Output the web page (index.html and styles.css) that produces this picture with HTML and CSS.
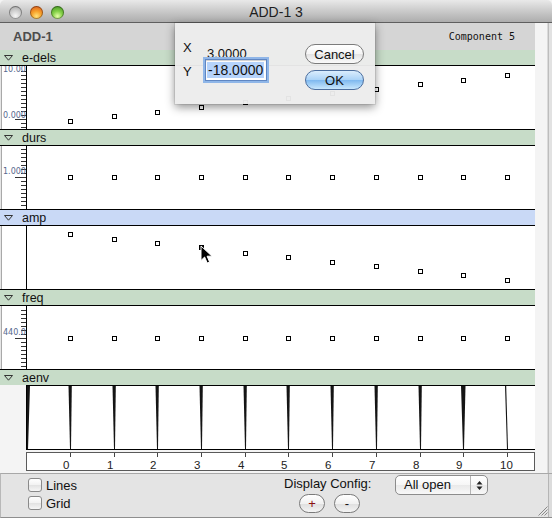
FILE: index.html
```html
<!DOCTYPE html>
<html>
<head>
<meta charset="utf-8">
<title>ADD-1 3</title>
<link rel="stylesheet" href="styles.css">
</head>
<body>
<div class="window">
  <header class="titlebar">
    <div class="lights"><span class="light l-grey"></span><span class="light l-red"></span><span class="light l-green"></span></div>
    <div class="title">ADD-1 3</div>
    <div></div>
  </header>

  <div class="main">
    <div class="content">
      <div class="topbar"><span class="name">ADD-1</span><span class="comp">Component 5</span></div>

      <section class="track">
        <div class="thead"><svg class="tri" width="9" height="6"><path d="M0.5 0.5H8.5L4.5 5.2Z"/></svg>e-dels</div>
        <div class="tbody">
          <div class="ruler">
            <svg width="26" height="63">
              <path class="ticks" d="M21 5.5H26M21 9.5H26M21 13.5H26M21 17.5H26M21 21.5H26M21 25.5H26M21 29.5H26M21 33.5H26M21 37.5H26M21 41.5H26M21 45.5H26M21 49.5H26M15 53.5H26M21 57.5H26M21 61.5H26"/>
              <text class="rlabel" x="3" y="5.5">10.00</text>
              <text class="rlabel" x="3" y="51.5">0.000</text>
            </svg>
          </div>
          <div class="plot">
            <svg width="508" height="63">
              <g class="pts">
                <rect x="41.5" y="53.5" width="4" height="4"/><rect x="85.5" y="48.5" width="4" height="4"/><rect x="128.5" y="44.5" width="4" height="4"/><rect x="172.5" y="39.5" width="4" height="4"/><rect x="216.5" y="34.5" width="4" height="4"/><rect x="259.5" y="30.5" width="4" height="4"/><rect x="303.5" y="25.5" width="4" height="4"/><rect x="347.5" y="21.5" width="4" height="4"/><rect x="391.5" y="16.5" width="4" height="4"/><rect x="434.5" y="12.5" width="4" height="4"/><rect x="478.5" y="7.5" width="4" height="4"/>
              </g>
            </svg>
          </div>
        </div>
      </section>

      <section class="track">
        <div class="thead"><svg class="tri" width="9" height="6"><path d="M0.5 0.5H8.5L4.5 5.2Z"/></svg>durs</div>
        <div class="tbody">
          <div class="ruler">
            <svg width="26" height="63">
              <path class="ticks" d="M21 3.5H26M21 7.5H26M21 11.5H26M21 15.5H26M21 19.5H26M21 23.5H26M21 27.5H26M15 31.5H26M21 35.5H26M21 39.5H26M21 43.5H26M21 47.5H26M21 51.5H26M21 55.5H26M21 59.5H26"/>
              <text class="rlabel" x="3" y="28">1.000</text>
            </svg>
          </div>
          <div class="plot">
            <svg width="508" height="63">
              <g class="pts">
                <rect x="41.5" y="29.5" width="4" height="4"/><rect x="85.5" y="29.5" width="4" height="4"/><rect x="128.5" y="29.5" width="4" height="4"/><rect x="172.5" y="29.5" width="4" height="4"/><rect x="216.5" y="29.5" width="4" height="4"/><rect x="259.5" y="29.5" width="4" height="4"/><rect x="303.5" y="29.5" width="4" height="4"/><rect x="347.5" y="29.5" width="4" height="4"/><rect x="391.5" y="29.5" width="4" height="4"/><rect x="434.5" y="29.5" width="4" height="4"/><rect x="478.5" y="29.5" width="4" height="4"/>
              </g>
            </svg>
          </div>
        </div>
      </section>

      <section class="track">
        <div class="thead selected"><svg class="tri" width="9" height="6"><path d="M0.5 0.5H8.5L4.5 5.2Z"/></svg>amp</div>
        <div class="tbody">
          <div class="ruler"></div>
          <div class="plot">
            <svg width="508" height="63">
              <g class="pts">
                <rect x="41.5" y="6.5" width="4" height="4"/><rect x="85.5" y="11.5" width="4" height="4"/><rect x="128.5" y="15.5" width="4" height="4"/><rect class="on" x="172.5" y="19.5" width="4" height="4"/><rect x="216.5" y="25.5" width="4" height="4"/><rect x="259.5" y="29.5" width="4" height="4"/><rect x="303.5" y="34.5" width="4" height="4"/><rect x="347.5" y="38.5" width="4" height="4"/><rect x="391.5" y="43.5" width="4" height="4"/><rect x="434.5" y="47.5" width="4" height="4"/><rect x="478.5" y="52.5" width="4" height="4"/>
              </g>
            </svg>
          </div>
        </div>
      </section>

      <section class="track">
        <div class="thead"><svg class="tri" width="9" height="6"><path d="M0.5 0.5H8.5L4.5 5.2Z"/></svg>freq</div>
        <div class="tbody">
          <div class="ruler">
            <svg width="26" height="63">
              <path class="ticks" d="M21 4.5H26M21 8.5H26M21 12.5H26M21 16.5H26M21 20.5H26M21 24.5H26M21 28.5H26M15 32.5H26M21 36.5H26M21 40.5H26M21 44.5H26M21 48.5H26M21 52.5H26M21 56.5H26M21 60.5H26"/>
              <text class="rlabel" x="3" y="29">440.0</text>
            </svg>
          </div>
          <div class="plot">
            <svg width="508" height="63">
              <g class="pts">
                <rect x="41.5" y="30.5" width="4" height="4"/><rect x="85.5" y="30.5" width="4" height="4"/><rect x="128.5" y="30.5" width="4" height="4"/><rect x="172.5" y="30.5" width="4" height="4"/><rect x="216.5" y="30.5" width="4" height="4"/><rect x="259.5" y="30.5" width="4" height="4"/><rect x="303.5" y="30.5" width="4" height="4"/><rect x="347.5" y="30.5" width="4" height="4"/><rect x="391.5" y="30.5" width="4" height="4"/><rect x="434.5" y="30.5" width="4" height="4"/><rect x="478.5" y="30.5" width="4" height="4"/>
              </g>
            </svg>
          </div>
        </div>
      </section>

      <section class="track">
        <div class="thead"><svg class="tri" width="9" height="6"><path d="M0.5 0.5H8.5L4.5 5.2Z"/></svg>aenv</div>
        <div class="tbody">
          <div class="ruler blank"></div>
          <div class="plot">
            <svg width="508" height="63">
              <g class="env">
                <polygon points="0,0 3,0 1,63 0,63"/>
                <polygon points="41.5,0 44.8,0 44,63 43,63"/>
                <polygon points="85.5,0 88.8,0 88,63 87,63"/>
                <polygon points="128.5,0 131.8,0 131,63 130,63"/>
                <polygon points="172.5,0 175.8,0 175,63 174,63"/>
                <polygon points="216.5,0 219.8,0 219,63 218,63"/>
                <polygon points="259.5,0 262.8,0 262,63 261,63"/>
                <polygon points="303.5,0 306.8,0 306,63 305,63"/>
                <polygon points="347.5,0 350.8,0 350,63 349,63"/>
                <polygon points="391.5,0 394.8,0 394,63 393,63"/>
                <polygon points="434,0 438.5,0 437,63 436,63"/>
                <polygon points="478,0 479.2,0 481,63 480,63"/>
              </g>
            </svg>
          </div>
        </div>
      </section>

      <div class="axis-wrap">
        <div class="axis">
          <svg width="507" height="17">
            <path class="aticks" d="M43.5 0V4M87.5 0V4M130.5 0V4M174.5 0V4M218.5 0V4M261.5 0V4M305.5 0V4M349.5 0V4M393.5 0V4M436.5 0V4M480.5 0V4"/>
            <g class="alabels">
              <text x="36" y="16">0</text><text x="80" y="16">1</text><text x="123" y="16">2</text><text x="167" y="16">3</text><text x="211" y="16">4</text><text x="254" y="16">5</text><text x="298" y="16">6</text><text x="342" y="16">7</text><text x="386" y="16">8</text><text x="429" y="16">9</text><text x="473" y="16">10</text>
            </g>
          </svg>
        </div>
      </div>
    </div>
    <div class="side"></div>
  </div>

  <footer class="controls">
    <div class="checks">
      <label class="check"><span class="box"></span>Lines</label>
      <label class="check"><span class="box"></span>Grid</label>
    </div>
    <div class="config">
      <div class="config-label">Display Config:</div>
      <div class="pm">
        <button class="round plus">+</button>
        <button class="round minus">-</button>
      </div>
    </div>
    <div class="popup">
      <span class="popup-text">All open</span>
      <span class="popup-arrows"><svg width="7" height="11"><path d="M3.5 1L6.5 4.5H0.5Z M3.5 10L0.5 6.5H6.5Z"/></svg></span>
    </div>
    <svg class="grip" width="12" height="12"><path d="M11.5 2.5L2.5 11.5M11.5 5.5L5.5 11.5M11.5 8.5L8.5 11.5"/></svg>
  </footer>

  <div class="sheet">
    <div class="fields">
      <span class="lab lab-x">X</span><span class="xval">3.0000</span>
      <span class="lab lab-y">Y</span><div class="field"><span class="sel">-18.0000</span></div>
    </div>
    <div class="buttons">
      <button class="btn cancel">Cancel</button>
      <button class="btn ok">OK</button>
    </div>
  </div>

  <svg class="cursor" width="13" height="20"><path d="M1 1L1 15.5L4.6 12L7.2 18L9.6 17L7.1 11.2L12 11.2Z"/></svg>
</div>
</body>
</html>
```

FILE: styles.css
```css
* { box-sizing: border-box; }
html, body { margin: 0; padding: 0; }
body {
  width: 552px;
  height: 518px;
  overflow: hidden;
  background: #d9d9d9;
  font-family: "Liberation Sans", Arial, sans-serif;
  color: #111;
}
.window {
  position: relative;
  width: 552px;
  height: 518px;
  display: flex;
  flex-direction: column;
  background: #f4f4f4;
}

/* title bar */
.titlebar {
  height: 23px;
  flex: none;
  display: grid;
  grid-template-columns: 1fr auto 1fr;
  align-items: center;
  background: linear-gradient(#e9e9e9, #cdcdcd 45%, #adadad);
  border-bottom: 1px solid #5f5f5f;
  border-radius: 5px 5px 0 0;
}
.lights { display: flex; gap: 8px; padding-left: 9px; padding-top: 2px; }
.light {
  width: 13px; height: 13px; border-radius: 50%;
  box-shadow: inset 0 0 0 1px rgba(0,0,0,.35);
}
.l-grey { background: radial-gradient(circle at 50% 75%, #f6f6f6 0%, #cfcfcf 45%, #9a9a9a 100%); }
.l-red { background: radial-gradient(circle at 50% 78%, #ffe27a 0%, #f7a32c 40%, #d8501a 95%); }
.l-green { background: radial-gradient(circle at 50% 78%, #e6ffa8 0%, #86d24a 40%, #3b8d1c 95%); }
.title { font-size: 14px; color: #1e1e1e; padding-top: 2px; }

/* main area */
.main { display: flex; height: 450px; flex: none; }
.content { width: 535px; display: flex; flex-direction: column; }
.side {
  flex: 1;
  background: linear-gradient(to right, #f4f4f4 0 12px, #dadada 12px 13px, #bdbdbd 13px 14px, #e2e2e2 14px);
}

.topbar {
  height: 27px;
  display: flex;
  align-items: center;
  justify-content: space-between;
  padding: 0 20px 0 13px;
  background: #d5d5d5;
}
.name { font-weight: bold; font-size: 13px; color: #4d4d4d; }
.comp { font-family: "DejaVu Sans Mono", "Liberation Mono", monospace; font-size: 10px; color: #111; }

/* tracks */
.track { height: 80px; display: flex; flex-direction: column; }
.thead {
  height: 15px;
  display: flex;
  align-items: center;
  padding-left: 4px;
  font-size: 12.5px;
  background: #c7dcc8;
}
.thead.selected { background: #c9d9f6; }
.tri { margin-right: 9px; fill: none; stroke: #333; stroke-width: 1; }
.tbody { height: 65px; display: flex; }
.ruler {
  width: 26px;
  background: #fff;
  border-top: 1px solid #000;
  border-bottom: 1px solid #000;
  box-shadow: inset 1px 0 #e6e6e6, inset 2px 0 #a9a9a9;
  overflow: hidden;
}
.ruler svg { display: block; }
.ruler.blank { background: transparent; border: none; box-shadow: none; }
.ticks { stroke: #333; stroke-width: 1; shape-rendering: crispEdges; }
.rlabel { font-family: "DejaVu Sans", sans-serif; font-size: 8px; fill: #56688e; }
.plot {
  flex: 1;
  background: #fff;
  border-top: 1px solid #000;
  border-bottom: 1px solid #000;
  border-left: 1px solid #000;
}
.plot svg { display: block; }
.pts rect { fill: #fff; stroke: #000; stroke-width: 1; shape-rendering: crispEdges; }
.pts rect.on { fill: #000; }
.env polygon { fill: #141414; }

/* axis */
.axis-wrap { height: 23px; padding: 2px 0 0 26px; }
.axis { width: 509px; height: 19px; border: 1px solid #5a5a5a; background: #fff; }
.axis svg { display: block; }
.aticks { stroke: #444; stroke-width: 1; shape-rendering: crispEdges; }
.alabels text { font-family: "Liberation Sans", Arial, sans-serif; font-size: 11.5px; fill: #222; }

/* bottom controls */
.controls {
  flex: 1;
  display: flex;
  align-items: flex-start;
  padding-left: 27px;
  font-size: 13px;
  border-top: 1px solid #a8a8a8;
  border-left: 1px solid #b8b8b8;
  border-bottom: 1px solid #8e8e8e;
  background: linear-gradient(to right, #e4e4e4 calc(100% - 4px), #b5b5b5 calc(100% - 4px) calc(100% - 3px), #dcdcdc calc(100% - 3px));
}
.checks { width: 256px; display: flex; flex-direction: column; gap: 4px; padding-top: 4px; }
.check { display: flex; align-items: center; gap: 4px; height: 14px; color: #111; }
.box {
  width: 14px; height: 14px;
  border: 1px solid #8a8a8a;
  border-radius: 3px;
  background: linear-gradient(#ffffff, #f2f2f2 50%, #e2e2e2 51%, #f6f6f6);
}
.config { width: 111px; display: flex; flex-direction: column; padding-top: 2px; }
.config-label { line-height: 15px; }
.pm { display: flex; gap: 9px; padding-left: 15px; margin-top: 3px; }
.round {
  width: 26px; height: 19px; padding: 0;
  border: 1px solid #7a7a7a;
  border-radius: 10px;
  background: linear-gradient(#ffffff, #f1f1f1 50%, #dedede 51%, #f4f4f4);
  font: 13px "Liberation Sans", Arial, sans-serif;
  line-height: 16px;
  color: #111;
}
.plus { color: #8a0f0f; }
.popup {
  width: 93px; height: 20px; margin-top: 1px;
  display: flex;
  border: 1px solid #8c8c8c;
  border-radius: 5px;
  background: linear-gradient(#ffffff, #f6f6f6 50%, #e9e9e9 51%, #f8f8f8);
}
.popup-text { flex: 1; padding-left: 8px; line-height: 18px; }
.popup-arrows {
  width: 17px;
  border-left: 1px solid #b4b4b4;
  display: flex; align-items: center; justify-content: center;
}
.popup-arrows svg { display: block; fill: #222; }
.grip { margin-left: auto; align-self: flex-end; margin-right: 4px; margin-bottom: 1px; stroke: #8a8a8a; stroke-width: 1; fill: none; }

/* sheet dialog */
.sheet {
  position: absolute;
  left: 175px; top: 23px;
  width: 200px; height: 81px;
  display: flex;
  align-items: flex-start;
  padding: 17px 0 0 8px;
  background: rgba(236, 236, 236, 0.96);
  box-shadow: 0 3px 9px rgba(0,0,0,.45), 0 0 0 1px rgba(0,0,0,.08);
  font-size: 13px;
  z-index: 5;
}
.fields { display: grid; grid-template-columns: 22px 62px; grid-template-rows: 19px 22px; }
.lab-x { align-self: start; line-height: 16px; }
.xval { align-self: end; line-height: 16px; margin-bottom: -3px; padding-left: 2px; }
.lab-y { align-self: center; padding-top: 3px; }
.field {
  position: relative;
  height: 22px;
  border: 1px solid #5f86c2;
  box-shadow: 0 0 0 2px #8fb6e8, inset 0 1px 1px rgba(0,0,0,.2);
  background: #fff;
  padding: 2px 1px 0 1px;
  font-size: 14px;
  line-height: 16px;
}
.sel { background: #b5d3fb; padding: 0 1px; }
.buttons { display: flex; flex-direction: column; gap: 6px; margin-left: 38px; margin-top: 4px; }
.btn {
  width: 59px; height: 20px; padding: 0;
  border-radius: 10px;
  font: 13px "Liberation Sans", Arial, sans-serif;
  color: #111;
}
.cancel { border: 1px solid #7b7b7b; background: linear-gradient(#ffffff, #f5f5f5 50%, #e3e3e3 51%, #fafafa); }
.ok { border: 1px solid #4c6e9e; background: linear-gradient(#dbedfd, #a9d2f7 50%, #7eb8ef 51%, #c8e7fd); }

.cursor { position: absolute; left: 200px; top: 245px; z-index: 6; }
.cursor path { fill: #000; stroke: #fff; stroke-width: 1; }
```
